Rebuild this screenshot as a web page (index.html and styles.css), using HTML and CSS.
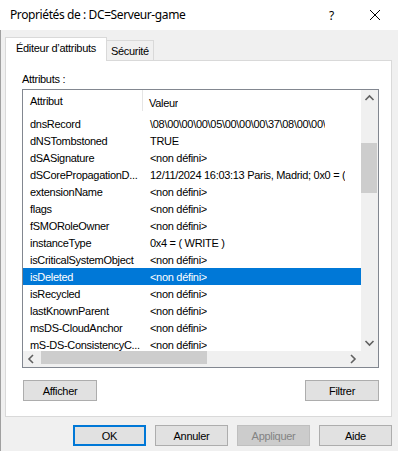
FILE: index.html
```html
<!DOCTYPE html>
<html lang="fr">
<head>
<meta charset="utf-8">
<title>Propriétés de : DC=Serveur-game</title>
<link rel="stylesheet" href="styles.css">
</head>
<body>
<div class="window">
  <div class="titlebar">
    <span class="title">Propriétés de : DC=Serveur-game</span>
    <span class="help">?</span>
    <svg class="close" width="12" height="12" viewBox="0 0 12 12"><path d="M1 1L11 11M11 1L1 11" stroke="#000" stroke-width="1" fill="none"/></svg>
  </div>
  <div class="body">
    <div class="tabs">
      <div class="tab active">Éditeur d’attributs</div>
      <div class="tab">Sécurité</div>
    </div>
    <div class="panel">
      <div class="label">Attributs :</div>
      <div class="listbox">
        <div class="list">
          <div class="row head"><span class="c1 sep">Attribut</span><span class="c2">Valeur</span></div>
          <div class="row"><span class="c1">dnsRecord</span><span class="c2">\08\00\00\00\05\00\00\00\37\08\00\00\</span></div>
          <div class="row"><span class="c1">dNSTombstoned</span><span class="c2">TRUE</span></div>
          <div class="row"><span class="c1">dSASignature</span><span class="c2">&lt;non défini&gt;</span></div>
          <div class="row"><span class="c1">dSCorePropagationD...</span><span class="c2">12/11/2024 16:03:13 Paris, Madrid; 0x0 = (</span></div>
          <div class="row"><span class="c1">extensionName</span><span class="c2">&lt;non défini&gt;</span></div>
          <div class="row"><span class="c1">flags</span><span class="c2">&lt;non défini&gt;</span></div>
          <div class="row"><span class="c1">fSMORoleOwner</span><span class="c2">&lt;non défini&gt;</span></div>
          <div class="row"><span class="c1">instanceType</span><span class="c2">0x4 = ( WRITE )</span></div>
          <div class="row"><span class="c1">isCriticalSystemObject</span><span class="c2">&lt;non défini&gt;</span></div>
          <div class="row selected"><span class="c1">isDeleted</span><span class="c2">&lt;non défini&gt;</span></div>
          <div class="row"><span class="c1">isRecycled</span><span class="c2">&lt;non défini&gt;</span></div>
          <div class="row"><span class="c1">lastKnownParent</span><span class="c2">&lt;non défini&gt;</span></div>
          <div class="row"><span class="c1">msDS-CloudAnchor</span><span class="c2">&lt;non défini&gt;</span></div>
          <div class="row"><span class="c1">mS-DS-ConsistencyC...</span><span class="c2">&lt;non défini&gt;</span></div>
        </div>
        <div class="vscroll">
          <svg class="arrow" width="17" height="17" viewBox="0 0 17 17"><path d="M4.5 10L8.5 6L12.5 10" stroke="#606060" stroke-width="1.6" fill="none"/></svg>
          <div class="vtrack"><div class="vthumb"></div></div>
          <svg class="arrow" width="17" height="17" viewBox="0 0 17 17"><path d="M4.5 7L8.5 11L12.5 7" stroke="#606060" stroke-width="1.6" fill="none"/></svg>
        </div>
        <div class="hscroll">
          <svg class="arrow" width="17" height="16" viewBox="0 0 17 16"><path d="M10 4L6 8L10 12" stroke="#606060" stroke-width="1.6" fill="none"/></svg>
          <div class="htrack"><div class="hthumb"></div></div>
          <svg class="arrow" width="17" height="16" viewBox="0 0 17 16"><path d="M7 4L11 8L7 12" stroke="#606060" stroke-width="1.6" fill="none"/></svg>
        </div>
        <div class="corner"></div>
      </div>
      <div class="actions">
        <button class="btn">Afficher</button>
        <button class="btn">Filtrer</button>
      </div>
    </div>
    <div class="footer">
      <button class="btn default">OK</button>
      <button class="btn">Annuler</button>
      <button class="btn disabled">Appliquer</button>
      <button class="btn">Aide</button>
    </div>
  </div>
</div>
</body>
</html>
```
FILE: styles.css
```css
* { box-sizing: border-box; }
html, body { margin: 0; padding: 0; }
body {
  width: 398px;
  height: 451px;
  overflow: hidden;
  background: #f0f0f0;
  font-family: "Liberation Sans", Arial, sans-serif;
  font-size: 11px;
  letter-spacing: -0.3px;
  color: #000;
}
.window { width: 398px; height: 451px; display: flex; flex-direction: column; }
.titlebar {
  height: 30px;
  background: #fff;
  display: flex;
  align-items: center;
  padding-left: 10px;
  flex: none;
}
.title {
  font-family: "Noto Sans", "Segoe UI", sans-serif;
  font-size: 12px;
  letter-spacing: -0.4px;
  flex: 1;
  margin-top: -1px;
}
.help {
  font-family: "Noto Sans", sans-serif;
  font-size: 12px;
  margin-right: 35px;
}
.close { margin-right: 17px; }
.body {
  flex: 1;
  border-left: 1px solid #a0a0a0;
  padding: 7px 6px 0 4px;
  display: flex;
  flex-direction: column;
}
.tabs { display: flex; align-items: flex-end; height: 23px; position: relative; z-index: 1; }
.tab {
  height: 20px;
  padding: 0 4px;
  border: 1px solid #d9d9d9;
  border-bottom: none;
  display: flex;
  align-items: center;
  background: #f0f0f0;
}
.tab.active {
  background: #fff;
  padding: 0 10px 3px 10px;
  margin-bottom: -1px;
  height: 24px;
}
.tab + .tab { border-left: none; }
.panel {
  height: 357px;
  background: #fff;
  border: 1px solid #d9d9d9;
  padding: 11px 11px 0 16px;
  display: flex;
  flex-direction: column;
}
.label { height: 17px; line-height: 14px; }
.listbox {
  width: 357px;
  height: 279px;
  border: 1px solid #828790;
  display: grid;
  grid-template-columns: 338px 17px;
  grid-template-rows: 261px 16px;
}
.list { overflow: hidden; }
.row { display: flex; height: 17px; align-items: center; white-space: nowrap; }
.row.head { height: 25px; align-items: stretch; }
.row.head span { display: flex; align-items: center; padding-top: 1px; }
.c1 { width: 120px; padding-left: 7px; overflow: hidden; flex: none; }
.c2 { padding-left: 7px; overflow: hidden; }
.sep { border-right: 1px solid #e5e5e5; margin-bottom: 4px; }
.row.head .c2 { padding-left: 6px; }
.row.selected { background: #0078d7; color: #fff; }
.vscroll { background: #f0f0f0; display: flex; flex-direction: column; }
.vtrack { flex: 1; position: relative; }
.vthumb { position: absolute; left: 0; width: 16px; top: 36px; height: 50px; background: #cdcdcd; }
.hscroll { background: #f0f0f0; display: flex; align-items: stretch; }
.htrack { flex: 1; position: relative; }
.hthumb { position: absolute; top: 0; height: 13px; left: 1px; width: 166px; background: #cdcdcd; }
.corner { background: #f0f0f0; }
.arrow { display: block; flex: none; }
.actions {
  display: flex;
  justify-content: space-between;
  width: 357px;
  margin-top: 12px;
  padding-left: 1px;
}
.btn {
  font-family: "Liberation Sans", Arial, sans-serif;
  font-size: 11px;
  letter-spacing: -0.3px;
  width: 74px;
  height: 21px;
  background: #e1e1e1;
  border: 1px solid #adadad;
  color: #000;
  padding: 0;
}
.footer {
  display: flex;
  justify-content: flex-end;
  gap: 9px;
  padding-top: 8px;
}
.footer .btn { width: 73px; height: 21px; }
.btn.default { border: 2px solid #0078d7; }
.btn.disabled { background: #cccccc; border-color: #bfbfbf; color: #838383; }
```
